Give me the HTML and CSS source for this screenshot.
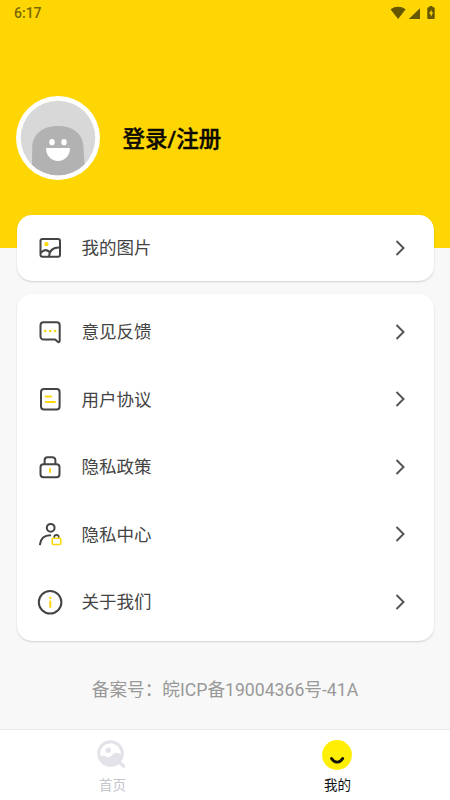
FILE: index.html
```html
<!DOCTYPE html>
<html lang="zh-CN">
<head>
<meta charset="utf-8">
<title>我的</title>
<link rel="stylesheet" href="styles.css">
</head>
<body>
<div class="app">
  <header class="hero">
    <div class="status">
      <span class="time">6:17</span>
      <svg class="status-icons" width="48" height="16" viewBox="0 0 48 16" fill="#655600">
        <path d="M.5 3.2Q8 -1.6 15.700 3.200L8.100 13z"/>
        <path d="M30 2.200V13H18.800z"/>
        <path d="M39.500 0h3v1.300h1.200a1 1 0 0 1 1 1V12a1 1 0 0 1-1 1h-5.400a1 1 0 0 1-1-1V2.300a1 1 0 0 1 1-1h1.200z"/>
        <path d="M41.600 3.500 39 7.800h1.700v3.200L43.200 6.600h-1.600z" fill="#fed604"/>
      </svg>
    </div>
    <div class="profile">
      <svg class="avatar" width="84" height="84" viewBox="0 0 84 84">
        <defs><clipPath id="face"><circle cx="42" cy="42" r="37.300"/></clipPath></defs>
        <circle cx="42" cy="42" r="42" fill="#fff"/>
        <circle cx="42" cy="42" r="37.300" fill="#d8d8d8"/>
        <path d="M15.500 84 16.300 52C16.300 37 28 30 42 30s25.500 7 25.500 22L69.500 84z" fill="#b2b2b2" clip-path="url(#face)"/>
        <ellipse cx="36" cy="46.200" rx="2.700" ry="3.100" fill="#fff"/>
        <ellipse cx="48" cy="46.200" rx="2.700" ry="3.100" fill="#fff"/>
        <path d="M30 52h24c0 7.500-5 13-12 13s-12-5.500-12-13z" fill="#fff"/>
      </svg>
      <h1 class="login">登录/注册</h1>
    </div>
  </header>

  <main class="content">
    <section class="card">
      <div class="row">
        <svg class="icon" viewBox="0 0 26 26"><rect x="3.500" y="4" width="19.500" height="17.800" rx="2"/><path d="M4 17.500c3.500-3.500 6.500-2.500 8.500-.5M12.200 21.500c0-6 4-9.300 10.500-9"/><circle class="dot" cx="9.400" cy="9.200" r="2.100"/></svg>
        <span class="label">我的图片</span>
        <svg class="arrow" viewBox="0 0 10 18"><path d="M1.500 2 8.500 9l-7 7"/></svg>
      </div>
    </section>

    <section class="card list">
      <div class="row">
        <svg class="icon" viewBox="0 0 26 26"><path d="M6.500 3.300h13.200a3 3 0 0 1 3 3v15.500c0 1.300-1 1.700-2 .9l-2.500-2.200H6.500a3 3 0 0 1-3-3V6.300a3 3 0 0 1 3-3z"/><g class="dot"><circle cx="8.200" cy="12" r="1.300"/><circle cx="13.200" cy="12" r="1.300"/><circle cx="18.200" cy="12" r="1.300"/></g></svg>
        <span class="label">意见反馈</span>
        <svg class="arrow" viewBox="0 0 10 18"><path d="M1.500 2 8.500 9l-7 7"/></svg>
      </div>
      <div class="row">
        <svg class="icon" viewBox="0 0 26 26"><rect x="4" y="3.100" width="18.600" height="20.400" rx="3"/><path class="accent" d="M8.700 10.600h5.400M8.700 16h9.200"/></svg>
        <span class="label">用户协议</span>
        <svg class="arrow" viewBox="0 0 10 18"><path d="M1.500 2 8.500 9l-7 7"/></svg>
      </div>
      <div class="row">
        <svg class="icon" viewBox="0 0 26 26"><rect x="3.500" y="10.300" width="19" height="13" rx="3"/><path d="M7.600 10V6.200a3 3 0 0 1 3-3h4.800a3 3 0 0 1 3 3V10"/><path class="accent" d="M13 14.900v3.200"/></svg>
        <span class="label">隐私政策</span>
        <svg class="arrow" viewBox="0 0 10 18"><path d="M1.500 2 8.500 9l-7 7"/></svg>
      </div>
      <div class="row">
        <svg class="icon" viewBox="0 0 26 26"><circle cx="13.700" cy="6.800" r="3.900"/><path d="M3 23.300c.8-5.500 4.700-8.900 10.200-9"/><path class="thin" d="M17.200 17v-.8a2.300 2.300 0 0 1 4.600 0v.8"/><rect class="accent thin-line" x="15.200" y="17.300" width="8.600" height="6.200" rx="1.200"/></svg>
        <span class="label">隐私中心</span>
        <svg class="arrow" viewBox="0 0 10 18"><path d="M1.500 2 8.500 9l-7 7"/></svg>
      </div>
      <div class="row">
        <svg class="icon" viewBox="0 0 26 26"><circle cx="13.100" cy="13.200" r="11.300"/><path class="accent" d="M13.300 12.400v5.500"/><circle class="dot" cx="13.400" cy="9" r="1.200"/></svg>
        <span class="label">关于我们</span>
        <svg class="arrow" viewBox="0 0 10 18"><path d="M1.500 2 8.500 9l-7 7"/></svg>
      </div>
    </section>
    <p class="record">备案号：皖ICP备19004366号-41A</p>
  </main>

  <nav class="tabs">
    <div class="tab">
      <svg class="tab-icon" viewBox="0 0 30 30">
        <path d="m22.500 22.500 4 3.500" stroke="#e3e2e8" stroke-width="3.500" stroke-linecap="round"/>
        <circle cx="13.500" cy="13.500" r="11.800" fill="#fff" stroke="#e3e2e8" stroke-width="3"/>
        <circle cx="11.200" cy="10.200" r="2.700" fill="#e3e2e8"/>
        <path d="M2 17c3-1.500 5.500-2 7.500-.3 2 1.500 3.500.8 5.200-1.200 3-3.500 6-3.500 10.300-.5-.5 6-5 11-11.500 11S3 22 2 17z" fill="#e3e2e8"/>
      </svg>
      <span>首页</span>
    </div>
    <div class="tab active">
      <svg class="tab-icon" viewBox="0 0 30 30">
        <circle cx="15" cy="15" r="15" fill="#ffef04"/>
        <path d="M9.500 18.500c3 4.800 8.200 4.800 11.200 0" fill="none" stroke="#111" stroke-width="2.900" stroke-linecap="round"/>
      </svg>
      <span>我的</span>
    </div>
  </nav>
</div>
</body>
</html>
```

FILE: styles.css
```css
* { box-sizing: border-box; }

body {
  margin: 0;
  font-family: Roboto, "Noto Sans CJK SC", sans-serif;
}

.app {
  width: 450px;
  height: 800px;
  display: flex;
  flex-direction: column;
  overflow: hidden;
  background: #f8f8f8;
}

.hero {
  height: 248px;
  flex: none;
  background: #fed604;
}

.status {
  height: 26px;
  padding: 0 12px 0 14px;
  display: flex;
  align-items: center;
  justify-content: space-between;
}

.time {
  font-size: 14px;
  font-weight: 500;
  line-height: 26px;
  color: #7a6802;
}

.status-icons { margin-top: 1px; }

.profile {
  display: flex;
  align-items: center;
  gap: 22.500px;
  padding: 70px 0 0 16px;
}

.avatar { flex: none; }

.login {
  margin: 0;
  padding-top: 2px;
  font-size: 22.5px;
  font-weight: 500;
  line-height: 32px;
  color: #0c0a00;
  -webkit-text-stroke: .4px #0c0a00;
}

.content {
  flex: 1;
  margin-top: -33.500px;
  padding: 0 16.500px;
}

.card {
  background: #fff;
  border-radius: 15px;
  box-shadow: 0 1px 2px rgba(0, 0, 0, .16);
}

.list {
  margin-top: 12.500px;
  padding: 4.500px 0 5.500px;
}

.row {
  height: 67.500px;
  padding: 0 28.500px 0 20.500px;
  display: flex;
  align-items: center;
}

.card:not(.list) .row { height: 66.500px; }

.icon {
  width: 26px;
  height: 26px;
  fill: none;
  stroke: #444;
  stroke-width: 2;
  stroke-linecap: round;
  stroke-linejoin: round;
}

.icon .accent { stroke: #fcd80b; }
.icon .thin, .icon .thin-line { stroke-width: 1.6; }
.icon .dot { fill: #fcd80b; stroke: none; }

.label {
  flex: 1;
  margin-left: 18.500px;
  padding-top: 1px;
  font-size: 17.500px;
  line-height: 26px;
  color: #444;
}

.arrow {
  width: 10px;
  height: 18px;
  fill: none;
  stroke: #555;
  stroke-width: 2;
}

.record {
  margin: 36px 0 0;
  text-align: center;
  font-size: 17.650px;
  line-height: 26px;
  color: #999;
}

.tabs {
  height: 71px;
  flex: none;
  display: flex;
  background: #fff;
  border-top: 1px solid #e9e9e9;
}

.tab {
  flex: 1;
  padding-top: 10px;
  display: flex;
  flex-direction: column;
  align-items: center;
  font-size: 13.500px;
  line-height: 20px;
  color: #c5c5cc;
}

.tab-icon {
  width: 30px;
  height: 30px;
  margin: 0 1px 5px 0;
}

.tab.active { color: #111; }
```
